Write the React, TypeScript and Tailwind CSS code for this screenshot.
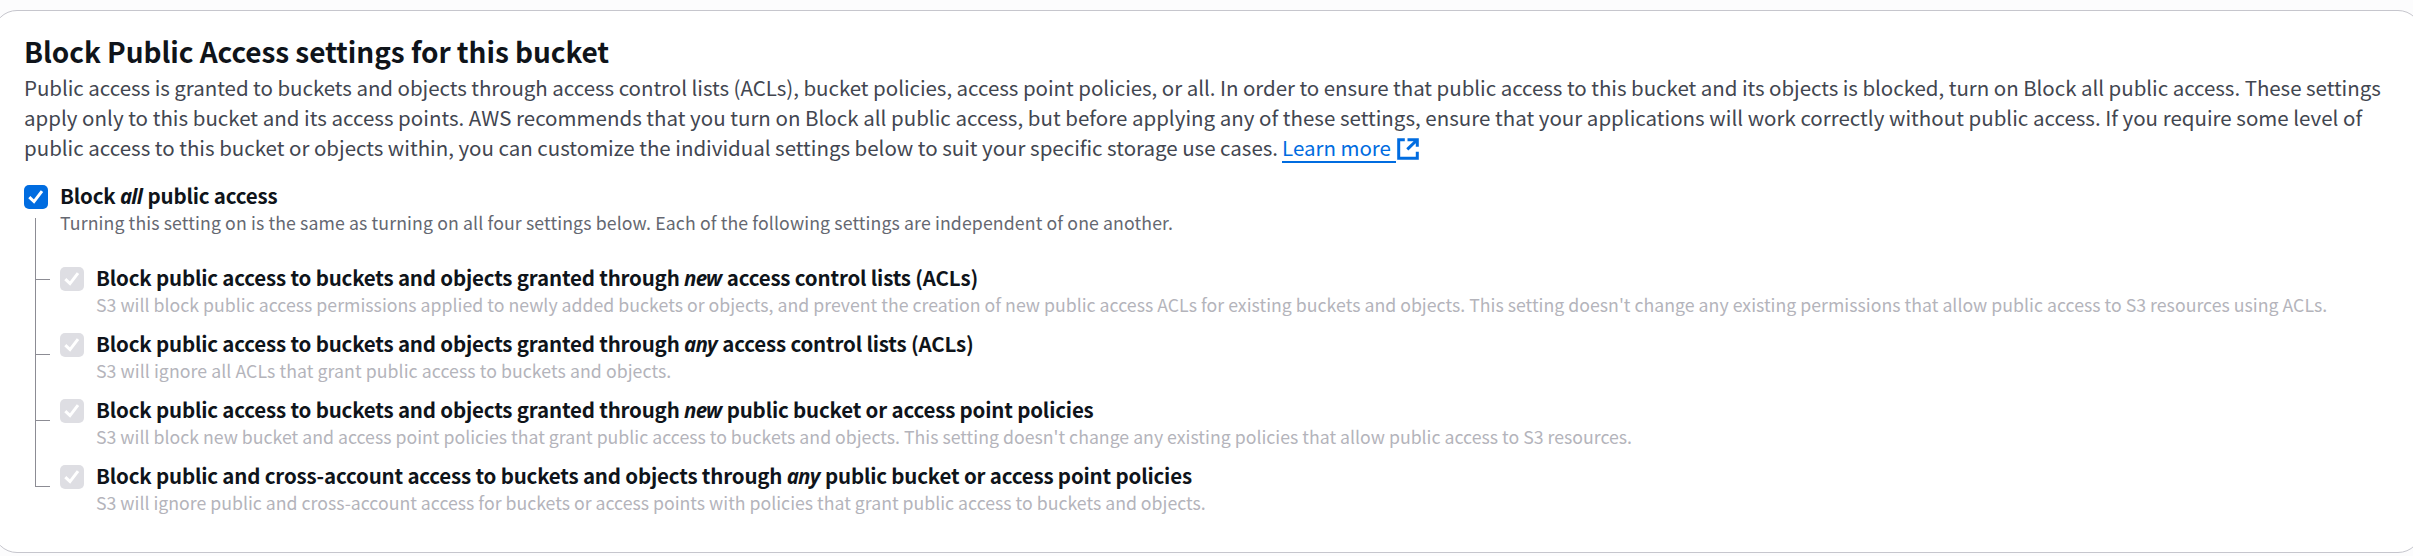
import type { ReactNode } from "react";

function CheckBox({ disabled = false }: { disabled?: boolean }) {
  return (
    <span
      className={
        disabled
          ? "mt-[5px] block h-6 w-6 shrink-0 rounded-[5px] bg-[#dedee3]"
          : "mt-[5px] block h-6 w-6 shrink-0 rounded-[5px] bg-[#006ce0]"
      }
    >
      <svg viewBox="0 0 24 24" className="h-6 w-6" fill="none" stroke="#ffffff" strokeWidth="3">
        <path d="M5.3 12.2 L10 16.6 L18 6.2" />
      </svg>
    </span>
  );
}

function Em({ children }: { children: ReactNode }) {
  return <em className="mr-px font-['Noto_Sans'] leading-[0] font-bold tracking-[-0.8px]">{children}</em>;
}

function Label({ children }: { children: ReactNode }) {
  return (
    <div className="h-[30px] text-[20.5px] leading-[30px] font-bold tracking-[-0.18px] text-[#0f141a]">{children}</div>
  );
}

function Tick({ top }: { top: string }) {
  return <span className={`absolute left-0 h-px w-[14px] bg-[#8c8c94] ${top}`} />;
}

const settings = [
  {
    label: (
      <>
        Block public access to buckets and objects granted through <Em>new</Em> access control lists (ACLs)
      </>
    ),
    tracking: "tracking-[0.02px]",
    text: "S3 will block public access permissions applied to newly added buckets or objects, and prevent the creation of new public access ACLs for existing buckets and objects. This setting doesn't change any existing permissions that allow public access to S3 resources using ACLs.",
  },
  {
    label: (
      <>
        Block public access to buckets and objects granted through <Em>any</Em> access control lists (ACLs)
      </>
    ),
    tracking: "tracking-[0.07px]",
    text: "S3 will ignore all ACLs that grant public access to buckets and objects.",
  },
  {
    label: (
      <>
        Block public access to buckets and objects granted through <Em>new</Em> public bucket or access point policies
      </>
    ),
    tracking: "tracking-[0.01px]",
    text: "S3 will block new bucket and access point policies that grant public access to buckets and objects. This setting doesn't change any existing policies that allow public access to S3 resources.",
  },
  {
    label: (
      <>
        Block public and cross-account access to buckets and objects through <Em>any</Em> public bucket or access point
        policies
      </>
    ),
    tracking: "tracking-[0.005px]",
    text: "S3 will ignore public and cross-account access for buckets or access points with policies that grant public access to buckets and objects.",
  },
];

export default function App() {
  return (
    <div className="h-[556px] w-full overflow-hidden bg-[#fcfcfd] pt-[10px] font-['Noto_Sans_CJK_SC',sans-serif] whitespace-nowrap">
      <section className="-mr-[9px] -ml-[7px] h-[543px] rounded-3xl border border-[#c6c6cd] bg-white pt-[22px] pl-[30px]">
        <h2 className="h-9 text-[28px] leading-9 font-bold tracking-[-0.06px] text-[#0f141a]">
          Block Public Access settings for this bucket
        </h2>
        <div className="mt-[3px] h-[90px] text-[20.5px] leading-[30px] text-[#424650]">
          <p className="tracking-[-0.04px]">
            Public access is granted to buckets and objects through access control lists (ACLs), bucket policies, access
            point policies, or all. In order to ensure that public access to this bucket and its objects is blocked,
            turn on Block all public access. These settings
          </p>
          <p className="tracking-[0.01px]">
            apply only to this bucket and its access points. AWS recommends that you turn on Block all public access,
            but before applying any of these settings, ensure that your applications will work correctly without public
            access. If you require some level of
          </p>
          <p className="flex tracking-[-0.01px]">
            <span>
              public access to this bucket or objects within, you can customize the individual settings below to suit
              your specific storage use cases.
            </span>
            <a className="ml-1 flex text-[#006ce0]">
              <span className="h-[31px] w-[114px] border-b-2 border-[#006ce0]">Learn more</span>
              <svg
                viewBox="0 0 22 22"
                className="mt-[6px] ml-px h-[22px] w-[22px]"
                fill="none"
                stroke="#006ce0"
                strokeWidth="3"
              >
                <path d="M7.8 1.7H1.7V20.3H20.3V13.8M10.5 1.7H20.3V8.8M20 2L10.3 11.3" />
              </svg>
            </a>
          </p>
        </div>

        <div className="mt-[18px] flex gap-3">
          <CheckBox />
          <div>
            <Label>
              Block <Em>all</Em> public access
            </Label>
            <p className="h-[25px] text-[17.7px] leading-6 tracking-[0.12px] text-[#656871]">
              Turning this setting on is the same as turning on all four settings below. Each of the following settings
              are independent of one another.
            </p>
          </div>
        </div>

        <div className="relative -mt-[17px] ml-[11px] h-[269px] border-l border-[#8c8c94]">
          <Tick top="top-[61px]" />
          <Tick top="top-[136px]" />
          <Tick top="top-[202px]" />
          <Tick top="top-[268px]" />
          <div className="flex flex-col gap-[11px] pt-11 pl-6">
            {settings.map((s) => (
              <div key={s.text} className="flex gap-3">
                <CheckBox disabled />
                <div>
                  <Label>{s.label}</Label>
                  <p className={`h-[25px] text-[17.7px] leading-6 text-[#b4b4bb] ${s.tracking}`}>{s.text}</p>
                </div>
              </div>
            ))}
          </div>
        </div>
      </section>
    </div>
  );
}
